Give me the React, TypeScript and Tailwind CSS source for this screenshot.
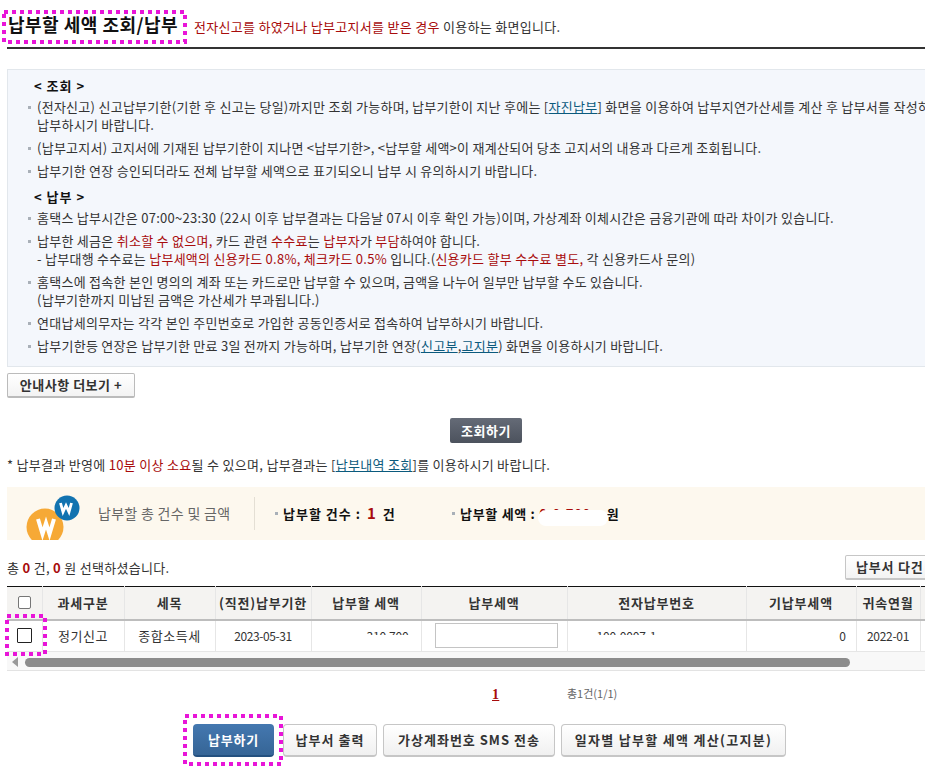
import React from 'react'

const FONT = 'font-["Noto_Sans_CJK_KR","Noto_Sans",sans-serif]'

// ─── Small text helpers ───────────────────────────────────────────────────────

function Red({ children }: { children: React.ReactNode }) {
  return <span className="text-[#a80c0c]">{children}</span>
}

function Link({ children }: { children: React.ReactNode }) {
  return <span className="text-[#0b5a7d] underline">{children}</span>
}

function Bullet({ children, className = '' }: { children: React.ReactNode; className?: string }) {
  return (
    <li className={`relative pl-[29px] whitespace-nowrap leading-[18px] ${className}`}>
      <span className="absolute left-[20px] top-[8px] w-[3px] h-[3px] bg-[#a9b0b8]" />
      {children}
    </li>
  )
}

// Hand-drawn annotation round a screen element: square magenta dots
function Dotted({ w, h, className }: { w: number; h: number; className: string }) {
  return (
    <svg width={w} height={h} className={`absolute pointer-events-none ${className}`}>
      <rect x="2" y="2" width={w - 4} height={h - 4} fill="none" stroke="#e815d8" strokeWidth="4" strokeDasharray="4 4" />
    </svg>
  )
}

function GrayButton({ children, className = '' }: { children: React.ReactNode; className?: string }) {
  return (
    <button className={`h-[33px] rounded-[4px] border border-[#c6c6c6] border-b-2 bg-gradient-to-b from-white to-[#f0f0f0] text-[13px] font-bold text-[#333] whitespace-nowrap ${className}`}>
      {children}
    </button>
  )
}

// ─── Notice box ───────────────────────────────────────────────────────────────

function Notice() {
  return (
    <div className="ml-[7px] mt-[20px] w-[1000px] h-[298px] bg-[#f4f7fc] border border-[#e2e7ec] pt-[7px] text-[13px] tracking-[0.27px] text-[#333]">
      <p className="pl-[26px] font-bold text-[#111] leading-[18px] tracking-[1px]">&lt; 조회 &gt;</p>
      <ul>
        <Bullet className="mt-[3px]">
          (전자신고) 신고납부기한(기한 후 신고는 당일)까지만 조회 가능하며, 납부기한이 지난 후에는 [<Link>자진납부</Link>] 화면을 이용하여 납부지연가산세를 계산 후 납부서를 작성하여
          <br />
          납부하시기 바랍니다.
        </Bullet>
        <Bullet className="mt-[5px]">(납부고지서) 고지서에 기재된 납부기한이 지나면 &lt;납부기한&gt;, &lt;납부할 세액&gt;이 재계산되어 당초 고지서의 내용과 다르게 조회됩니다.</Bullet>
        <Bullet className="mt-[5px]">납부기한 연장 승인되더라도 전체 납부할 세액으로 표기되오니 납부 시 유의하시기 바랍니다.</Bullet>
      </ul>
      <p className="pl-[26px] mt-[8px] font-bold text-[#111] leading-[18px] tracking-[1px]">&lt; 납부 &gt;</p>
      <ul>
        <Bullet className="mt-[3px]">홈택스 납부시간은 07:00~23:30 (22시 이후 납부결과는 다음날 07시 이후 확인 가능)이며, 가상계좌 이체시간은 금융기관에 따라 차이가 있습니다.</Bullet>
        <Bullet className="mt-[5px]">
          납부한 세금은 <Red>취소할 수 없으며,</Red> 카드 관련 <Red>수수료</Red>는 <Red>납부자</Red>가 <Red>부담</Red>하여야 합니다.
          <br />- 납부대행 수수료는 <Red>납부세액의 신용카드 0.8%, 체크카드 0.5%</Red> 입니다.(<Red>신용카드 할부 수수료 별도,</Red> 각 신용카드사 문의)
        </Bullet>
        <Bullet className="mt-[5px]">
          홈택스에 접속한 본인 명의의 계좌 또는 카드로만 납부할 수 있으며, 금액을 나누어 일부만 납부할 수도 있습니다.
          <br />
          (납부기한까지 미납된 금액은 가산세가 부과됩니다.)
        </Bullet>
        <Bullet className="mt-[5px]">연대납세의무자는 각각 본인 주민번호로 가입한 공동인증서로 접속하여 납부하시기 바랍니다.</Bullet>
        <Bullet className="mt-[5px]">납부기한등 연장은 납부기한 만료 3일 전까지 가능하며, 납부기한 연장(<Link>신고분</Link>,<Link>고지분</Link>) 화면을 이용하시기 바랍니다.</Bullet>
      </ul>
    </div>
  )
}

// ─── Summary banner ───────────────────────────────────────────────────────────

function WonIcon() {
  return (
    <svg width="62" height="53" viewBox="0 0 62 53" className="shrink-0">
      <circle cx="24" cy="40" r="18.500" fill="#f6a936" />
      <path d="M17 32L21.500 47L25 36L28.500 47L33 32" fill="none" stroke="#fff" strokeWidth="4" />
      <circle cx="46" cy="21" r="12.500" fill="#1273b0" />
      <path d="M39.500 16L42 25L45 18.500L48 25L50.500 16" fill="none" stroke="#fff" strokeWidth="2.800" />
    </svg>
  )
}

function Banner() {
  return (
    <div className="ml-[7px] mt-[13px] w-[1000px] h-[53px] overflow-hidden bg-[#fdf8ee] flex items-center text-[#111]">
      <div className="ml-[14px] h-[53px]">
        <WonIcon />
      </div>
      <span className="ml-[15px] w-[135px] text-[14px] tracking-[0.3px] text-[#666] whitespace-nowrap">납부할 총 건수 및 금액</span>
      <div className="ml-[21px] w-px h-[33px] bg-[#e4dfd4]" />
      <span className="ml-[20px] w-[3px] h-[3px] bg-[#a9b0b8]" />
      <span className="ml-[5px] w-[169px] text-[13px] font-bold whitespace-nowrap tracking-[1px]">
        납부할 건수 : <span className="text-[15px] text-[#a80c0c] mx-[2px]">1</span> 건
      </span>
      <span className="w-[3px] h-[3px] bg-[#a9b0b8]" />
      <span className="ml-[5px] relative text-[13px] font-bold whitespace-nowrap tracking-[0.7px]">
        납부할 세액 : <span className="text-[#a80c0c] inline-block w-[64px]">0,0,700</span> 원
        <span className="absolute left-[78px] top-[6px] w-[70px] h-[16px] bg-[#fff] rounded-[8px]" />
      </span>
    </div>
  )
}

// ─── Table ────────────────────────────────────────────────────────────────────

const HEADS = ['과세구분', '세목', '(직전)납부기한', '납부할 세액', '납부세액', '전자납부번호', '기납부세액', '귀속연월', '']
const WIDTHS = ['w-[35px]', 'w-[82px]', 'w-[91px]', 'w-[96px]', 'w-[110px]', 'w-[146px]', 'w-[179px]', 'w-[110px]', 'w-[64px]', 'w-[60px]']

function MaskedValue({ value }: { value: string }) {
  return (
    <span className="relative inline-block">
      {value}
      <span className="absolute left-[-3px] right-[-3px] top-[8px] h-[12px] bg-white" />
    </span>
  )
}

function ResultTable() {
  return (
    <div className="ml-[7px] mt-[6px] w-[1000px] relative text-[13px] tracking-[0.5px] text-[#333]">
      <table className="table-fixed border-collapse w-[973px] border-t border-t-[#111]">
        <colgroup>
          {WIDTHS.map((w, i) => (
            <col key={i} className={w} />
          ))}
        </colgroup>
        <thead>
          <tr className="h-[33px] bg-[#f4f3f1] border-b-2 border-b-[#bdbdbd]">
            <th className="border-r border-[#e6e6e6]">
              <span className="block mx-auto w-[13px] h-[13px] bg-white rounded-[2px] border border-[#767676]" />
            </th>
            {HEADS.map((h) => (
              <th key={h} className="border-r border-[#e6e6e6] text-[13px] font-bold text-[#333] whitespace-nowrap tracking-[0.8px]">
                {h}
              </th>
            ))}
          </tr>
        </thead>
        <tbody>
          <tr className="h-[32px] border-b border-[#e6e6e6] text-center">
            <td className="border-r border-[#e6e6e6]">
              <span className="block mx-auto w-[15px] h-[15px] bg-white border border-[#222] rounded-[1px]" />
            </td>
            <td className="border-r border-[#e6e6e6]">정기신고</td>
            <td className="border-r border-[#e6e6e6]">종합소득세</td>
            <td className="border-r border-[#e6e6e6] text-[12px] tracking-[-0.4px]">2023-05-31</td>
            <td className="border-r border-[#e6e6e6] text-right pr-[12px] text-[12px] tracking-[-0.2px]">
              <MaskedValue value="310,700" />
            </td>
            <td className="border-r border-[#e6e6e6]">
              <span className="block ml-[13px] w-[123px] h-[25px] bg-white border border-[#c4c4c4]" />
            </td>
            <td className="border-r border-[#e6e6e6] text-left pl-[29px] text-[12px] tracking-[-0.2px]">
              <MaskedValue value="100-0007-1" />
            </td>
            <td className="border-r border-[#e6e6e6] text-right pr-[9px] text-[12px]">0</td>
            <td className="border-r border-[#e6e6e6] text-[12px] tracking-[-0.3px]">2022-01</td>
            <td />
          </tr>
        </tbody>
      </table>
      <div className="h-[19px] pt-[2px] bg-[#f8f8f8] border-b border-[#e3e3e3] flex items-center">
        <span className="ml-[5px] w-0 h-0 border-y-[5px] border-y-transparent border-r-[6px] border-r-[#999]" />
        <span className="ml-[7px] w-[825px] h-[9px] rounded-full bg-[#8c8c8c]" />
      </div>
      <Dotted w={42} h={42} className="left-[-2px] top-[28px]" />
    </div>
  )
}

// ─── Page ─────────────────────────────────────────────────────────────────────

export default function App() {
  return (
    <div className={`w-[925px] h-[766px] overflow-hidden bg-white ${FONT} text-[13px] tracking-[0.3px] text-[#333]`}>
      <header className="relative flex items-end w-[1000px] ml-[7px] h-[49px] border-b-2 border-[#333] pb-[11px]">
        <h1 className="text-[18px] font-bold text-[#111] leading-[24px] ml-[1px] w-[179px] whitespace-nowrap tracking-[0.5px]">납부할 세액 조회/납부</h1>
        <p className="ml-[7px] leading-[18px] whitespace-nowrap">
          <Red>전자신고를 하였거나 납부고지서를 받은 경우</Red> 이용하는 화면입니다.
        </p>
        <Dotted w={185} h={34} className="left-[-5px] top-[10px]" />
      </header>

      <Notice />

      <div className="ml-[7px] mt-[6px]">
        <button className="w-[128px] h-[25px] rounded-[2px] border border-[#bbb] border-b-2 bg-gradient-to-b from-white to-[#f3f3f3] text-[13px] font-bold text-[#333] whitespace-nowrap tracking-[0.5px]">
          안내사항 더보기 +
        </button>
      </div>

      <div className="mt-[20px] ml-[450px]">
        <button className="w-[72px] h-[25px] rounded-[2px] bg-gradient-to-b from-[#656b77] to-[#4c525d] text-[13px] font-bold text-white tracking-[0.5px]">
          조회하기
        </button>
      </div>

      <p className="ml-[7px] mt-[13px] leading-[18px] whitespace-nowrap">
        * 납부결과 반영에 <Red>10분 이상 소요</Red>될 수 있으며, 납부결과는 [<Link>납부내역 조회</Link>]를 이용하시기 바랍니다.
      </p>

      <Banner />

      <div className="ml-[7px] mt-[15px] h-[25px] w-[1000px] flex items-center relative">
        <span className="whitespace-nowrap">
          총 <b className="text-[#a80c0c]">0</b> 건, <b className="text-[#a80c0c]">0</b> 원 선택하셨습니다.
        </span>
        <button className="absolute left-[838px] top-0 w-[110px] h-[25px] rounded-[2px] border border-[#c6c6c6] border-b-2 bg-gradient-to-b from-white to-[#f3f3f3] text-[13px] font-bold text-[#333] text-left pl-[10px] whitespace-nowrap tracking-[0.8px]">
          납부서 다건 출력
        </button>
      </div>

      <ResultTable />

      <div className="relative h-[53px] w-[925px]">
        <span className="absolute left-[492px] top-[13px] font-['Liberation_Serif',serif] text-[14px] font-bold text-[#a80c0c] underline">1</span>
        <span className="absolute left-[567px] top-[14px] text-[11px] text-[#666] tracking-normal">총1건(1/1)</span>
      </div>

      <div className="relative flex ml-[193px] gap-[6px]">
        <button className="w-[81px] h-[33px] rounded-[4px] border-b-2 border-[#24507f] bg-gradient-to-b from-[#4478b0] to-[#366596] text-[13px] font-bold text-white mr-[3px] tracking-[0.8px]">
          납부하기
        </button>
        <GrayButton className="w-[94px] tracking-[1px]">납부서 출력</GrayButton>
        <GrayButton className="w-[172px] tracking-[1px]">가상계좌번호 SMS 전송</GrayButton>
        <GrayButton className="w-[225px] tracking-[1.3px]">일자별 납부할 세액 계산(고지분)</GrayButton>
        <Dotted w={100} h={52} className="left-[-10px] top-[-10px]" />
      </div>
    </div>
  )
}
